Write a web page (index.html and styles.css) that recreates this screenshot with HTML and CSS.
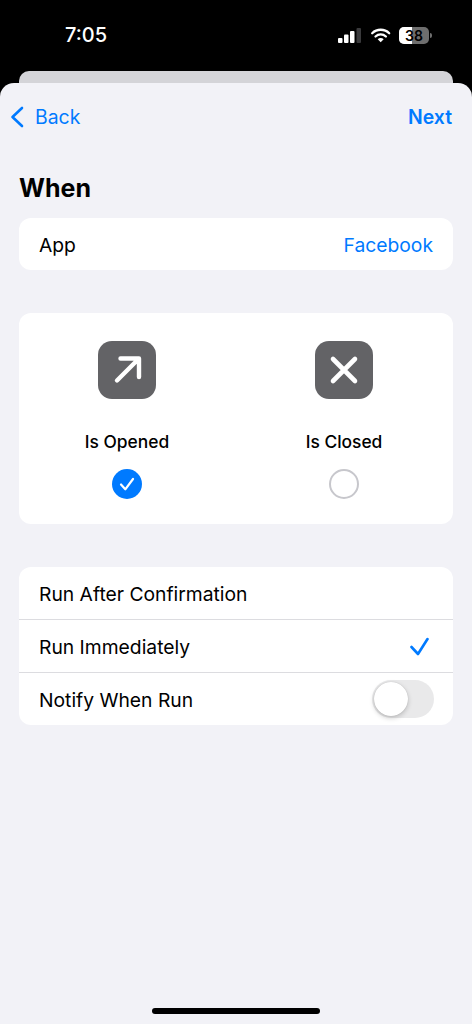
FILE: index.html
```html
<!DOCTYPE html>
<html lang="en">
<head>
<meta charset="UTF-8" />
<meta name="viewport" content="width=device-width, initial-scale=1" />
<title>When</title>
<link rel="stylesheet" href="styles.css">
</head>
<body>

<div class="screen">
  <!-- Status bar -->
  <div class="status-bar">
    <span class="time">7:05</span>
    <div class="status-icons">
      <svg class="signal" width="23" height="15" viewBox="0 0 23 15">
        <rect x="0" y="10" width="4.500" height="5" rx="1" fill="#fff"/>
        <rect x="6" y="6.500" width="4.500" height="8.500" rx="1" fill="#fff"/>
        <rect x="12" y="3" width="4.500" height="12" rx="1" fill="#fff"/>
        <rect x="18.500" y="0" width="4.500" height="15" rx="1" fill="#3a3a3c"/>
      </svg>
      <svg class="wifi" width="22" height="15" viewBox="0 0 22 15">
        <path d="M3.200 5.200a12.200 12.200 0 0 1 17 0" fill="none" stroke="#fff" stroke-width="2.300" stroke-linecap="round"/>
        <path d="M6.500 8.500a7.500 7.500 0 0 1 10.400 0" fill="none" stroke="#fff" stroke-width="2.300" stroke-linecap="round"/>
        <path d="M8.700 11.300l3 3 3-3a4.200 4.200 0 0 0-6 0z" fill="#fff"/>
      </svg>
      <div class="battery">
        <div class="battery-body">
          <div class="battery-fill"></div>
          <span class="battery-num">38</span>
        </div>
        <div class="battery-tip"></div>
      </div>
    </div>
  </div>

  <div class="sheet-behind"></div>

  <div class="sheet">
    <!-- Nav -->
    <div class="nav">
      <div class="nav-back">
        <svg width="16" height="22" viewBox="0 0 16 22">
          <path d="M13 2L3.500 11l9.500 9" fill="none" stroke="#007aff" stroke-width="2.600" stroke-linecap="round" stroke-linejoin="round"/>
        </svg>
        <span>Back</span>
      </div>
      <span class="nav-next">Next</span>
    </div>

    <h1 class="title">When</h1>

    <div class="card">
      <div class="row">
        <span>App</span>
        <span class="row-value">Facebook</span>
      </div>
    </div>

    <!-- Opened / closed picker -->
    <div class="card picker">
      <div class="option">
        <div class="option-icon">
          <svg width="58" height="58" viewBox="0 0 58 58">
            <path d="M19 39.500L40 18.500M22.500 17.500h18.500V36" fill="none" stroke="#fff" stroke-width="4.400" stroke-linecap="round" stroke-linejoin="round"/>
          </svg>
        </div>
        <span class="option-label">Is Opened</span>
        <div class="radio radio-on">
          <svg width="30" height="30" viewBox="0 0 30 30">
            <path d="M9 15.500l4.300 4.800L21 10" fill="none" stroke="#fff" stroke-width="2.200" stroke-linecap="round" stroke-linejoin="round"/>
          </svg>
        </div>
      </div>
      <div class="option">
        <div class="option-icon">
          <svg width="58" height="58" viewBox="0 0 58 58">
            <path d="M18 18l22 22M40 18L18 40" fill="none" stroke="#fff" stroke-width="4.600" stroke-linecap="round"/>
          </svg>
        </div>
        <span class="option-label">Is Closed</span>
        <div class="radio"></div>
      </div>
    </div>

    <div class="card">
      <div class="row">
        <span>Run After Confirmation</span>
      </div>
      <div class="row">
        <span>Run Immediately</span>
        <svg class="row-check" width="20" height="20" viewBox="0 0 20 20">
          <path d="M2.500 11L9 18 18.500 3" fill="none" stroke="#007aff" stroke-width="2.600" stroke-linecap="round" stroke-linejoin="round"/>
        </svg>
      </div>
      <div class="row">
        <span>Notify When Run</span>
        <div class="toggle"><div class="toggle-knob"></div></div>
      </div>
    </div>

    <div class="home-indicator"></div>
  </div>
</div>

</body>
</html>
```

FILE: styles.css
```css
* {
  box-sizing: border-box;
}
body {
  margin: 0;
  background: #000;
  color: #000;
  font-family: Inter, 'Noto Sans', sans-serif;
}
.screen {
  width: 472px;
  height: 1024px;
  display: flex;
  flex-direction: column;
  overflow: hidden;
}

/* Status bar */
.status-bar {
  height: 71px;
  flex: none;
  display: flex;
  justify-content: space-between;
  align-items: flex-start;
  padding: 23px 40px 0 65px;
  color: #fff;
}
.time {
  font-size: 20px;
  font-weight: 500;
  line-height: 24px;
}
.status-icons {
  display: flex;
  align-items: center;
  gap: 8px;
  height: 24px;
}
.battery {
  display: flex;
  align-items: center;
  gap: 1px;
}
.battery-body {
  position: relative;
  width: 30px;
  height: 17px;
  border-radius: 5px;
  background: #6e6e6e;
  overflow: hidden;
}
.battery-fill {
  width: 13px;
  height: 100%;
  background: #fff;
}
.battery-num {
  position: absolute;
  inset: 0;
  text-align: center;
  color: #000;
  font-size: 14px;
  font-weight: 600;
  line-height: 17px;
}
.battery-tip {
  width: 2px;
  height: 5px;
  border-radius: 0 2px 2px 0;
  background: #6e6e6e;
}

/* Sheets */
.sheet-behind {
  height: 12px;
  flex: none;
  margin: 0 19px;
  background: #d4d4d8;
  border-radius: 10px 10px 0 0;
}
.sheet {
  flex: 1;
  background: #f2f2f7;
  border-radius: 14px 14px 0 0;
  padding: 0 19px;
  display: flex;
  flex-direction: column;
}

/* Nav */
.nav {
  height: 68px;
  flex: none;
  display: flex;
  justify-content: space-between;
  align-items: center;
  color: #007aff;
  font-size: 19.400px;
}
.nav-back {
  display: flex;
  align-items: center;
  gap: 10px;
  margin-left: -10px;
}
.nav-next {
  font-weight: 600;
  margin-right: 1px;
}
.title {
  margin: 21px 0 13px;
  font-size: 25px;
  line-height: 33px;
  font-weight: 700;
}

/* Cards */
.card {
  background: #fff;
  border-radius: 12px;
  margin-bottom: 43px;
}
.row {
  height: 53px;
  padding: 0 20px;
  display: flex;
  justify-content: space-between;
  align-items: center;
  font-size: 19.300px;
  border-bottom: 1px solid #dcdce0;
}
.row span {
  margin-top: 2px;
}
.row:last-child {
  height: 52px;
  border-bottom: none;
}
.row-value {
  color: #007aff;
}
.row-check {
  margin-right: 4px;
}

/* Picker */
.picker {
  height: 211px;
  display: grid;
  grid-template-columns: 216px 218px;
  padding: 28px 0 0;
}
.option {
  display: flex;
  flex-direction: column;
  align-items: center;
}
.option-icon {
  width: 58px;
  height: 58px;
  border-radius: 14px;
  background: #636366;
  display: flex;
  align-items: center;
  justify-content: center;
}
.option-label {
  margin-top: 32px;
  font-size: 17.400px;
  font-weight: 500;
  line-height: 22px;
}
.radio {
  margin-top: 16px;
  width: 30px;
  height: 30px;
  border-radius: 50%;
  border: 2px solid #c7c7cc;
}
.radio-on {
  border: none;
  background: #007aff;
}

/* Toggle */
.toggle {
  width: 62px;
  height: 38px;
  margin-right: -1px;
  border-radius: 19px;
  background: #e9e9ea;
  padding: 2px;
}
.toggle-knob {
  width: 34px;
  height: 34px;
  border-radius: 50%;
  background: #fff;
  box-shadow: 0 2px 5px rgb(0 0 0 / 0.2), 0 0 1px rgb(0 0 0 / 0.2);
}

.home-indicator {
  width: 168px;
  height: 6px;
  flex: none;
  margin: auto auto 10px;
  border-radius: 3px;
  background: #000;
}
```
